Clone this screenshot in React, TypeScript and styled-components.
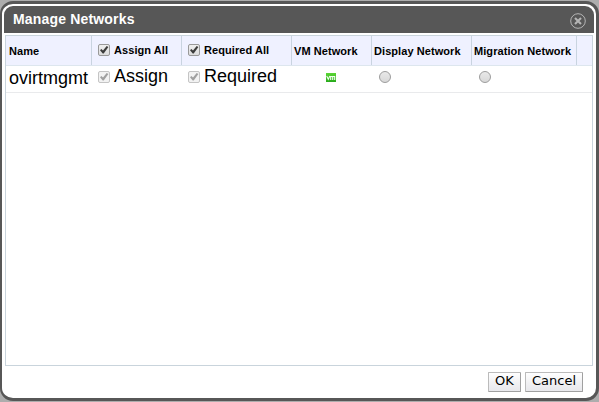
import React from 'react';
import styled, { createGlobalStyle } from 'styled-components';

const GlobalStyle = createGlobalStyle`
  *, *::before, *::after { box-sizing: border-box; }
  body { margin: 0; background: #adadad; overflow: hidden; }
`;

const Page = styled.div`
  width: 599px;
  height: 402px;
  padding-top: 1px;
  background: #adadad;
  font-family: "Liberation Sans", Arial, sans-serif;
  color: #000;
`;

const Dialog = styled.div`
  display: flex;
  flex-direction: column;
  width: 599px;
  height: 400px;
  padding: 2px 2px 0;
  border: solid #575757;
  border-width: 3px 3px 3px 2px;
  border-radius: 13px;
  background: #fff;
`;

const TitleBar = styled.header`
  display: flex;
  align-items: center;
  justify-content: space-between;
  flex: none;
  height: 27px;
  padding: 0 8px 0 9px;
  border-radius: 9px 9px 0 0;
  background: #575757;
`;

const Title = styled.h1`
  margin: 0;
  font-size: 14px;
  line-height: 27px;
  font-weight: bold;
  letter-spacing: 0.17px;
  color: #fff;
`;

const CloseButton = styled.button`
  display: block;
  width: 16px;
  height: 16px;
  margin-top: 3px;
  padding: 0;
  border: 0;
  background: none;
  svg { display: block; }
`;

const Table = styled.section`
  flex: none;
  width: 588px;
  height: 331px;
  margin: 2px 0 0 1px;
  border: 1px solid #c9d4dc;
`;

const Row = styled.div<{ $head?: boolean }>`
  display: grid;
  grid-template-columns: 86px 90px 110px 80px 100px 105px 15px;
  height: ${p => (p.$head ? 30 : 27)}px;
  background: ${p => (p.$head ? '#eff1ff' : '#fff')};
  border-bottom: 1px solid ${p => (p.$head ? '#dde6ee' : '#e9eaec')};
`;

const HeadCell = styled.div<{ $check?: boolean }>`
  display: flex;
  align-items: center;
  gap: 4px;
  padding: ${p => (p.$check ? '0 0 1px 6px' : '1px 0 0 2px')};
  border-right: 1px solid #c9d4e0;
  font-size: 11px;
  font-weight: bold;
  letter-spacing: 0.07px;
  line-height: 13px;
  white-space: nowrap;
  &:first-child { padding-left: 3px; }
  &:last-child { border-right: 0; }
`;

const Cell = styled.div<{ $left?: number; $top?: number }>`
  display: flex;
  align-items: flex-start;
  gap: 4px;
  padding: ${p => p.$top ?? 0}px 0 0 ${p => p.$left ?? 6}px;
  font-size: 18px;
  line-height: 20px;
  white-space: nowrap;
`;

const Box = styled.span<{ $disabled?: boolean }>`
  flex: none;
  width: 12px;
  height: 12px;
  margin-top: ${p => (p.$disabled ? 5 : 0)}px;
  border: 1px solid ${p => (p.$disabled ? '#c4c4c4' : '#989898')};
  border-radius: 2px;
  background: ${p => (p.$disabled ? '#f2f2f2' : 'linear-gradient(#eeeeee, #dddddd)')};
  color: ${p => (p.$disabled ? '#a0a0a0' : '#3c3c3c')};
  svg { display: block; }
`;

const Radio = styled.span`
  width: 12px;
  height: 12px;
  border: 1px solid #9c9c9c;
  border-radius: 50%;
  background: linear-gradient(#e9e9e9, #d8d8d8);
`;

const Footer = styled.footer`
  display: flex;
  justify-content: flex-end;
  gap: 4px;
  padding: 6px 11px 0 0;
`;

const Button = styled.button<{ $width: number }>`
  width: ${p => p.$width}px;
  height: 20px;
  padding: 0 0 2px;
  border: 1px solid #bbb;
  border-right-color: #a0a0a0;
  border-bottom-color: #a0a0a0;
  border-radius: 1px;
  background: linear-gradient(#fff, #f2f2f4 50%, #e8e8ec);
  font: 13px/16px "DejaVu Sans", Verdana, sans-serif;
  color: #000;
`;

function Check({ disabled }: { disabled?: boolean }) {
  return (
    <Box $disabled={disabled} role="checkbox" aria-checked="true" aria-disabled={disabled}>
      <svg width="10" height="10" viewBox="0 0 10 10">
        <path d="M1 5.2 2.4 4.1 4 5.6 7.7 .9 9.4 2 4.7 8.6H3.7Z" fill="currentColor" />
      </svg>
    </Box>
  );
}

function VmIcon() {
  return (
    <svg width="10" height="9" viewBox="0 0 10 9" role="img" aria-label="VM network">
      <defs>
        <linearGradient id="vmFill" x1="0" y1="0" x2="0" y2="1">
          <stop offset="0" stopColor="#5bd634" />
          <stop offset="1" stopColor="#27a91b" />
        </linearGradient>
      </defs>
      <rect width="10" height="9" fill="url(#vmFill)" />
      <path d="M.7 3 2.3 6.2 3.8 3M4.7 6.9V3.5H8.7V6.9M6.7 3.5V6.9" fill="none" stroke="#f2fff0" strokeWidth="1.1" />
    </svg>
  );
}

export default function App() {
  return (
    <Page>
      <GlobalStyle />
      <Dialog role="dialog" aria-label="Manage Networks">
        <TitleBar>
          <Title>Manage Networks</Title>
          <CloseButton aria-label="Close">
            <svg width="16" height="16" viewBox="0 0 16 16" fill="none" stroke="#b5b5b5">
              <circle cx="8" cy="8" r="7.3" strokeWidth="1" />
              <path d="M5 5 11 11M11 5 5 11" strokeWidth="2.1" />
            </svg>
          </CloseButton>
        </TitleBar>
        <Table>
          <Row $head>
            <HeadCell>Name</HeadCell>
            <HeadCell $check><Check />Assign All</HeadCell>
            <HeadCell $check><Check />Required All</HeadCell>
            <HeadCell>VM Network</HeadCell>
            <HeadCell>Display Network</HeadCell>
            <HeadCell>Migration Network</HeadCell>
            <HeadCell />
          </Row>
          <Row>
            <Cell $left={3} $top={2}>ovirtmgmt</Cell>
            <Cell><Check disabled />Assign</Cell>
            <Cell><Check disabled />Required</Cell>
            <Cell $left={34} $top={7}><VmIcon /></Cell>
            <Cell $left={7} $top={5}><Radio role="radio" aria-checked="false" /></Cell>
            <Cell $left={7} $top={5}><Radio role="radio" aria-checked="false" /></Cell>
          </Row>
        </Table>
        <Footer>
          <Button $width={33}>OK</Button>
          <Button $width={58}>Cancel</Button>
        </Footer>
      </Dialog>
    </Page>
  );
}
